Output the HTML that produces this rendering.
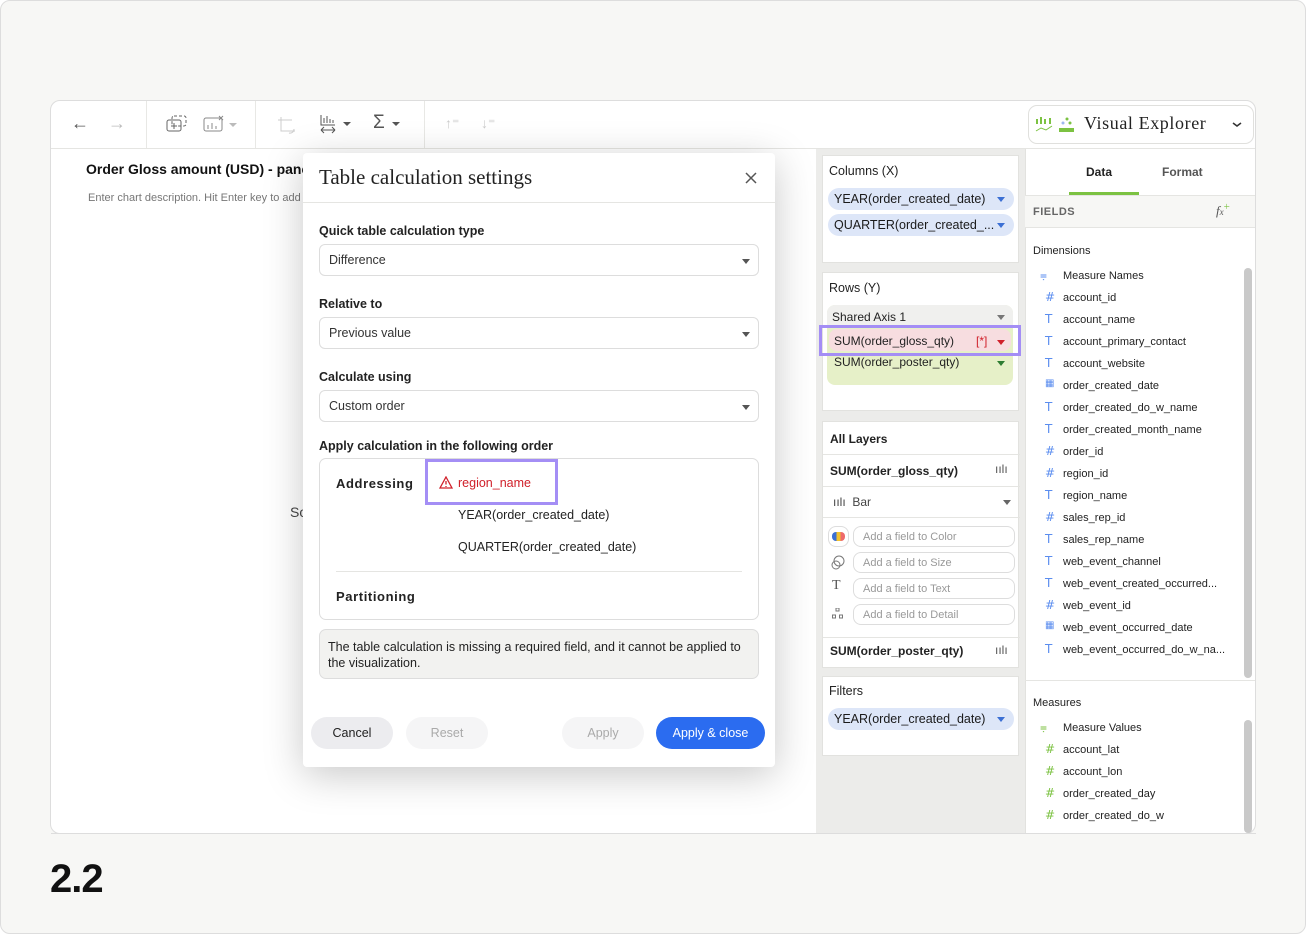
<!DOCTYPE html>
<html><head><meta charset="utf-8"><style>
*{box-sizing:border-box;margin:0;padding:0}
body{width:1306px;height:934px;background:#fff;font-family:"Liberation Sans",sans-serif;position:relative;overflow:hidden;color:#222}
.a{position:absolute}
.outer{left:0;top:0;width:1306px;height:934px;background:#f7f7f5;border:1px solid #ddd;border-radius:10px}
.app{left:50px;top:100px;width:1206px;height:734px;background:#fff;border:1px solid #ddd;border-radius:10px;overflow:hidden}
.t{font-size:13px;white-space:nowrap}
.b{font-weight:bold}
.pill{position:absolute;left:5px;width:186px;height:22px;border-radius:11px;background:#dde6f8;font-size:12.5px;padding:4px 0 0 6px;white-space:nowrap;overflow:hidden;color:#1a1a1a}
.pill .ar{position:absolute;right:9px;top:9px;width:0;height:0;border-left:4px solid transparent;border-right:4px solid transparent;border-top:5px solid #3b6fd4}
.card{position:absolute;left:6px;width:197px;background:#fff;border:1px solid #e2e2df}
.fld{position:absolute;left:1063px;font-size:11px;white-space:nowrap;color:#222}
.ic{position:absolute;left:1045px;font-size:12px;color:#5b8def;font-family:"DejaVu Sans",sans-serif}
.sel{position:absolute;left:16px;width:440px;height:32px;border:1px solid #ddd;border-radius:6px;font-size:12.5px;padding:8px 0 0 9px;color:#333}
.sel:after{content:"";position:absolute;right:8px;top:14px;border-left:4px solid transparent;border-right:4px solid transparent;border-top:5px solid #555}
.lbl{position:absolute;left:16px;font-size:12.5px;font-weight:bold;color:#222}
.btn{position:absolute;top:564px;height:32px;border-radius:16px;font-size:12.5px;text-align:center;padding-top:9px}
.add{position:absolute;left:30px;width:162px;height:21px;border:1px solid #ddd;border-radius:8px;font-size:11px;color:#999;padding:4px 0 0 9px}
</style></head><body>
<div class="a outer"></div>
<div class="a app">
 <div class="a" style="left:0;top:47px;width:1206px;height:1px;background:#e5e5e2"></div>
 <div class="a" style="left:95px;top:0;width:1px;height:47px;background:#e8e8e5"></div>
 <div class="a" style="left:204px;top:0;width:1px;height:47px;background:#e8e8e5"></div>
 <div class="a" style="left:373px;top:0;width:1px;height:47px;background:#e8e8e5"></div>
 <div class="a t" style="left:20px;top:12px;font-size:18px;color:#555">←</div>
 <div class="a t" style="left:57px;top:12px;font-size:18px;color:#bbb">→</div>
 <svg class="a" style="left:115px;top:13px" width="24" height="20"><rect x="1" y="6" width="14" height="11" rx="2" fill="none" stroke="#666"/><rect x="6" y="2" width="14" height="10" rx="2" fill="none" stroke="#666" stroke-dasharray="3 2"/><path d="M8 9v6M5 12h6" stroke="#666"/></svg>
 <svg class="a" style="left:152px;top:14px" width="40" height="18"><rect x="1" y="3" width="18" height="13" rx="2" fill="none" stroke="#888"/><path d="M5 14v-4M9 14v-6M13 14v-3" stroke="#888"/><path d="M16 1l4 4M20 1l-4 4" stroke="#888"/><path d="M26 8l4 4 4-4z" fill="#bbb"/></svg>
 <svg class="a" style="left:225px;top:14px" width="22" height="20"><path d="M5 2v14h14M2 5h14v0" stroke="#ccc" fill="none"/><path d="M13 18a4 4 0 0 0 5-4" stroke="#ccc" fill="none"/></svg>
 <svg class="a" style="left:268px;top:12px" width="36" height="22"><path d="M2 2v10h14M5 10V5M8 10V3M11 10V6M14 10V7" stroke="#555" fill="none"/><path d="M2 17h14M2 17l3-3M2 17l3 3M16 17l-3-3M16 17l-3 3" stroke="#555" fill="none"/><path d="M24 9l4 4 4-4z" fill="#555"/></svg>
 <div class="a" style="left:322px;top:11px;font-size:19px;color:#555">Σ</div>
 <svg class="a" style="left:340px;top:19px" width="10" height="8"><path d="M1 2l4 4 4-4z" fill="#555"/></svg>
 <div class="a t" style="left:394px;top:14px;color:#ccc;font-size:14px">↑⁼</div>
 <div class="a t" style="left:430px;top:14px;color:#ccc;font-size:14px">↓⁼</div>
 <div class="a" style="left:977px;top:4px;width:226px;height:39px;border:1px solid #e0e0dd;border-radius:9px"></div>
 <svg class="a" style="left:984px;top:14px" width="42" height="20"><g fill="#7cc242"><rect x="1" y="4" width="2" height="5"/><rect x="5" y="2" width="2" height="7"/><rect x="9" y="4" width="2" height="5"/><rect x="14" y="3" width="2" height="6"/><rect x="24" y="13" width="15" height="4"/><circle cx="32" cy="4" r="1.5"/><circle cx="28" cy="8" r="1.5" fill="#9fb7f0"/><circle cx="35" cy="8" r="1.5"/></g><path d="M1 16l5-3 5 2 6-4" stroke="#7cc242" fill="none"/></svg>
 <div class="a" style="left:1033px;top:12px;font-family:'Liberation Serif',serif;font-size:18px;color:#222;letter-spacing:.6px">Visual Explorer</div>
 <svg class="a" style="left:1181px;top:21px" width="10" height="6"><path d="M1 1l4 3 4-3" stroke="#333" stroke-width="1.6" fill="none"/></svg>

 <div class="a t b" style="left:35px;top:60px;font-size:14px;color:#111">Order Gloss amount (USD) - panel</div>
 <div class="a t" style="left:37px;top:91px;font-size:11px;color:#777">Enter chart description. Hit Enter key to add</div>
 <div class="a t" style="left:239px;top:403px;font-size:14px;color:#444">Sort</div>

 <div class="a" style="left:765px;top:48px;width:209px;height:686px;background:#ececea">
  <div class="card" style="top:6px;height:108px">
   <div class="a t" style="left:6px;top:8px;font-size:12.5px">Columns (X)</div>
   <div class="pill" style="top:32px">YEAR(order_created_date)<span class="ar"></span></div>
   <div class="pill" style="top:58px">QUARTER(order_created_...<span class="ar"></span></div>
  </div>
  <div class="card" style="top:123px;height:139px">
   <div class="a t" style="left:6px;top:8px;font-size:12.5px">Rows (Y)</div>
   <div class="a" style="left:4px;top:32px;width:186px;height:80px;background:#e6f0c8;border-radius:8px"></div>
   <div class="a" style="left:4px;top:32px;width:186px;height:22px;background:#f0f0ee;border-radius:8px 8px 0 0"></div>
   <div class="a t" style="left:9px;top:37px;font-size:12px">Shared Axis 1</div>
   <div class="a" style="left:174px;top:42px;border-left:4px solid transparent;border-right:4px solid transparent;border-top:5px solid #777"></div>
   <div class="a" style="left:6px;top:56px;width:182px;height:22px;background:#f7dde0;border-radius:8px"></div>
   <div class="a t" style="left:11px;top:61px;font-size:12px">SUM(order_gloss_qty)</div>
   <div class="a t" style="left:153px;top:61px;font-size:12px;color:#d0202a">[*]</div>
   <div class="a" style="left:174px;top:67px;border-left:4px solid transparent;border-right:4px solid transparent;border-top:5px solid #d0202a"></div>
   <div class="a t" style="left:11px;top:82px;font-size:12px">SUM(order_poster_qty)</div>
   <div class="a" style="left:174px;top:88px;border-left:4px solid transparent;border-right:4px solid transparent;border-top:5px solid #2e7d32"></div>
  </div>
  <div class="card" style="top:272px;height:247px">
   <div class="a t b" style="left:7px;top:10px;font-size:12px">All Layers</div>
   <div class="a" style="left:0;top:32px;width:197px;height:1px;background:#e5e5e2"></div>
   <div class="a t b" style="left:7px;top:42px;font-size:12px">SUM(order_gloss_qty)</div>
   <div class="a t" style="left:172px;top:40px;font-size:12px;color:#555">ıılı</div>
   <div class="a" style="left:0;top:64px;width:197px;height:1px;background:#e5e5e2"></div>
   <div class="a t" style="left:10px;top:73px;font-size:12px;color:#444">ıılı&nbsp; Bar</div>
   <div class="a" style="left:180px;top:78px;border-left:4px solid transparent;border-right:4px solid transparent;border-top:5px solid #666"></div>
   <div class="a" style="left:0;top:95px;width:197px;height:1px;background:#e5e5e2"></div>
   <div class="a" style="left:5px;top:104px;width:21px;height:21px;border:1px solid #ddd;border-radius:8px"></div>
   <div class="a" style="left:9px;top:110px;width:13px;height:9px;border-radius:4px;background:linear-gradient(90deg,#3b6fd4 33%,#f2c230 33% 66%,#ee6a6a 66%)"></div>
   <div class="add" style="top:104px">Add a field to Color</div>
   <svg class="a" style="left:7px;top:133px" width="16" height="16"><circle cx="9" cy="6" r="5" fill="none" stroke="#777"/><circle cx="6" cy="10" r="4" fill="none" stroke="#777"/></svg>
   <div class="add" style="top:130px">Add a field to Size</div>
   <div class="a" style="left:9px;top:156px;font-family:'Liberation Serif',serif;font-size:14px;color:#555">T</div>
   <div class="add" style="top:156px">Add a field to Text</div>
   <svg class="a" style="left:9px;top:186px" width="12" height="12"><rect x="4" y="0" width="3" height="3" fill="none" stroke="#777"/><rect x="0.5" y="7" width="3" height="3" fill="none" stroke="#777"/><rect x="7.5" y="7" width="3" height="3" fill="none" stroke="#777"/></svg>
   <div class="add" style="top:182px">Add a field to Detail</div>
   <div class="a" style="left:0;top:215px;width:197px;height:1px;background:#e5e5e2"></div>
   <div class="a t b" style="left:7px;top:222px;font-size:12px">SUM(order_poster_qty)</div>
   <div class="a t" style="left:172px;top:221px;font-size:12px;color:#555">ıılı</div>
  </div>
  <div class="card" style="top:527px;height:80px">
   <div class="a t" style="left:6px;top:7px;font-size:12.5px">Filters</div>
   <div class="pill" style="top:31px">YEAR(order_created_date)<span class="ar"></span></div>
  </div>
 </div>
 <div class="a" style="left:974px;top:48px;width:1px;height:686px;background:#e2e2df"></div>
</div>

<div class="a t b" style="left:1086px;top:165px;font-size:12px">Data</div>
<div class="a t b" style="left:1162px;top:165px;font-size:12px;color:#555">Format</div>
<div class="a" style="left:1069px;top:192px;width:70px;height:3px;background:#7cc242"></div>
<div class="a" style="left:1025px;top:195px;width:230px;height:1px;background:#e5e5e2"></div>
<div class="a" style="left:1025px;top:196px;width:230px;height:32px;background:#f7f7f5;border-bottom:1px solid #e5e5e2"></div>
<div class="a t b" style="left:1033px;top:206px;font-size:11px;color:#666;letter-spacing:.5px">FIELDS</div>
<div class="a t" style="left:1216px;top:203px;font-family:'Liberation Serif',serif;font-style:italic;color:#555">f<span style="font-size:9px">x</span><span style="color:#7cc242;font-style:normal;font-size:11px;position:relative;top:-5px">+</span></div>
<div class="a t" style="left:1033px;top:245px;font-size:11px">Dimensions</div>
<div class="a" style="left:1244px;top:268px;width:8px;height:410px;background:#c9c9c9;border-radius:4px"></div>
<div class="a" style="left:1025px;top:680px;width:230px;height:1px;background:#e5e5e2"></div>
<div class="a t" style="left:1033px;top:697px;font-size:11px">Measures</div>
<div class="a" style="left:1244px;top:720px;width:8px;height:113px;background:#c9c9c9;border-radius:4px"></div>

<div class="ic" style="top:268px;left:1040px">⩦</div><div class="fld" style="top:270px">Measure Names</div>
<div class="ic" style="top:290px">#</div><div class="fld" style="top:292px">account_id</div>
<div class="ic" style="top:312px">T</div><div class="fld" style="top:314px">account_name</div>
<div class="ic" style="top:334px">T</div><div class="fld" style="top:336px">account_primary_contact</div>
<div class="ic" style="top:356px">T</div><div class="fld" style="top:358px">account_website</div>
<div class="ic" style="top:378px;font-size:10px">▦</div><div class="fld" style="top:380px">order_created_date</div>
<div class="ic" style="top:400px">T</div><div class="fld" style="top:402px">order_created_do_w_name</div>
<div class="ic" style="top:422px">T</div><div class="fld" style="top:424px">order_created_month_name</div>
<div class="ic" style="top:444px">#</div><div class="fld" style="top:446px">order_id</div>
<div class="ic" style="top:466px">#</div><div class="fld" style="top:468px">region_id</div>
<div class="ic" style="top:488px">T</div><div class="fld" style="top:490px">region_name</div>
<div class="ic" style="top:510px">#</div><div class="fld" style="top:512px">sales_rep_id</div>
<div class="ic" style="top:532px">T</div><div class="fld" style="top:534px">sales_rep_name</div>
<div class="ic" style="top:554px">T</div><div class="fld" style="top:556px">web_event_channel</div>
<div class="ic" style="top:576px">T</div><div class="fld" style="top:578px">web_event_created_occurred...</div>
<div class="ic" style="top:598px">#</div><div class="fld" style="top:600px">web_event_id</div>
<div class="ic" style="top:620px;font-size:10px">▦</div><div class="fld" style="top:622px">web_event_occurred_date</div>
<div class="ic" style="top:642px">T</div><div class="fld" style="top:644px">web_event_occurred_do_w_na...</div>

<div class="ic" style="top:720px;left:1040px;color:#7cc242">⩦</div><div class="fld" style="top:722px">Measure Values</div>
<div class="ic" style="top:742px;color:#7cc242">#</div><div class="fld" style="top:744px">account_lat</div>
<div class="ic" style="top:764px;color:#7cc242">#</div><div class="fld" style="top:766px">account_lon</div>
<div class="ic" style="top:786px;color:#7cc242">#</div><div class="fld" style="top:788px">order_created_day</div>
<div class="ic" style="top:808px;color:#7cc242">#</div><div class="fld" style="top:810px">order_created_do_w</div>
<div class="a" style="left:1025px;top:833px;width:231px;height:10px;background:#f7f7f5"></div>
<div class="a" style="left:51px;top:833px;width:1205px;height:1px;background:#ddd"></div>

<div class="a" style="left:819px;top:325px;width:202px;height:31px;border:3px solid #a48ef5"></div>

<div class="a" style="left:303px;top:153px;width:472px;height:614px;background:#fff;border-radius:4px;box-shadow:0 8px 40px rgba(0,0,0,.22)">
 <div class="a" style="left:16px;top:12px;font-family:'Liberation Serif',serif;font-size:21px;color:#222;white-space:nowrap">Table calculation settings</div>
 <svg class="a" style="left:442px;top:19px" width="12" height="12"><path d="M1 1l10 10M11 1L1 11" stroke="#555" stroke-width="1.5"/></svg>
 <div class="a" style="left:0;top:49px;width:472px;height:1px;background:#e5e5e2"></div>
 <div class="lbl" style="top:71px">Quick table calculation type</div>
 <div class="sel" style="top:91px">Difference</div>
 <div class="lbl" style="top:144px">Relative to</div>
 <div class="sel" style="top:164px">Previous value</div>
 <div class="lbl" style="top:217px">Calculate using</div>
 <div class="sel" style="top:237px">Custom order</div>
 <div class="lbl" style="top:286px">Apply calculation in the following order</div>
 <div class="a" style="left:16px;top:305px;width:440px;height:162px;border:1px solid #ddd;border-radius:7px"></div>
 <div class="a t b" style="left:33px;top:323px;letter-spacing:.6px">Addressing</div>
 <div class="a" style="left:122px;top:306px;width:133px;height:46px;border:3px solid #a48ef5"></div>
 <svg class="a" style="left:136px;top:323px" width="14" height="13"><path d="M7 1L13 12H1z" fill="none" stroke="#d0202a" stroke-width="1.3"/><path d="M7 5v3.5M7 10v1" stroke="#d0202a" stroke-width="1.3"/></svg>
 <div class="a t" style="left:155px;top:323px;color:#d0202a;font-size:12.5px">region_name</div>
 <div class="a t" style="left:155px;top:355px;font-size:12.5px">YEAR(order_created_date)</div>
 <div class="a t" style="left:155px;top:387px;font-size:12.5px">QUARTER(order_created_date)</div>
 <div class="a" style="left:33px;top:418px;width:406px;height:1px;background:#e5e5e2"></div>
 <div class="a t b" style="left:33px;top:436px;letter-spacing:.6px">Partitioning</div>
 <div class="a" style="left:16px;top:476px;width:440px;height:50px;border:1px solid #ddd;border-radius:7px;background:#f2f2f0;font-size:12.5px;padding:9px 8px;line-height:16px;color:#222">The table calculation is missing a required field, and it cannot be applied to the visualization.</div>
 <div class="btn" style="left:8px;width:82px;background:#ececef;color:#222">Cancel</div>
 <div class="btn" style="left:103px;width:82px;background:#f5f5f6;color:#aaa">Reset</div>
 <div class="btn" style="left:259px;width:82px;background:#f5f5f6;color:#aaa">Apply</div>
 <div class="btn" style="left:353px;width:109px;background:#2b6cf0;color:#fff">Apply &amp; close</div>
</div>

<div class="a b" style="left:50px;top:857px;font-size:40px;color:#111;letter-spacing:-1px">2.2</div>
</body></html>
